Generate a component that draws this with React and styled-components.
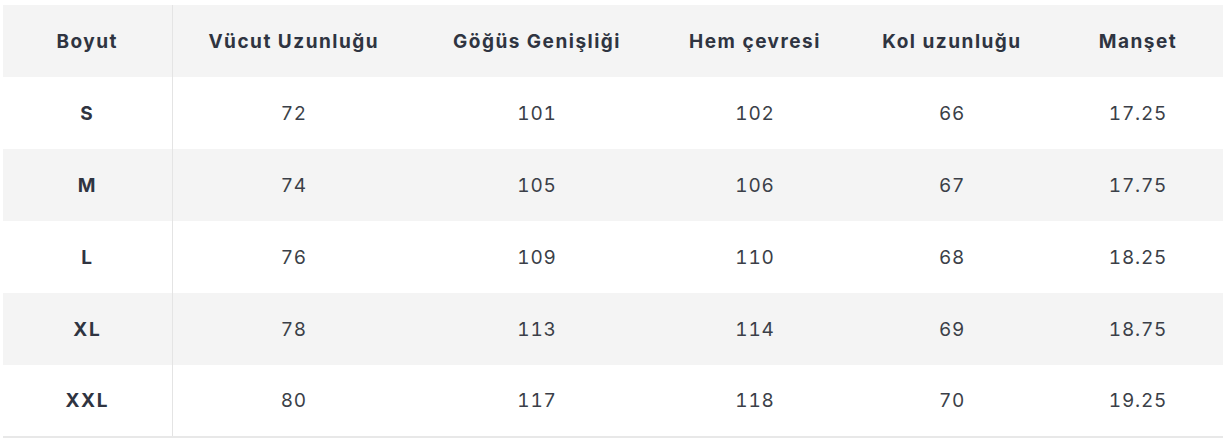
import React from 'react'
import styled, { createGlobalStyle } from 'styled-components'

const columns = ['Boyut', 'Vücut Uzunluğu', 'Göğüs Genişliği', 'Hem çevresi', 'Kol uzunluğu', 'Manşet']
const widths = [169, 243, 244, 192, 202, 170]

const rows = [
  ['S', '72', '101', '102', '66', '17.25'],
  ['M', '74', '105', '106', '67', '17.75'],
  ['L', '76', '109', '110', '68', '18.25'],
  ['XL', '78', '113', '114', '69', '18.75'],
  ['XXL', '80', '117', '118', '70', '19.25'],
]

function App() {
  return (
    <Page>
      <GlobalStyle />
      <Table>
        <colgroup>
          {widths.map((w, i) => <col key={i} style={{ width: w }} />)}
        </colgroup>
        <thead>
          <Row shaded>
            {columns.map((c, i) => <HeadCell key={c} first={i === 0}>{c}</HeadCell>)}
          </Row>
        </thead>
        <tbody>
          {rows.map((r, ri) => (
            <Row key={r[0]} shaded={ri % 2 === 1}>
              {r.map((v, i) => (
                <Cell key={i} first={i === 0}>{v}</Cell>
              ))}
            </Row>
          ))}
        </tbody>
      </Table>
    </Page>
  )
}

export default App

const GlobalStyle = createGlobalStyle`
  body {
    margin: 0;
    background: #fff;
    font-family: Inter, "Noto Sans", sans-serif;
  }
`
const Page = styled.div`
  padding: 5px 5px 0 3px;
`
const Table = styled.table`
  width: 1220px;
  border-collapse: collapse;
  table-layout: fixed;
  border-bottom: 2px solid #e8e8e8;
`
const Row = styled.tr`
  height: 72px;
  background: ${props => props.shaded ? '#f4f4f4' : '#fff'};
`
const HeadCell = styled.th`
  padding: 0;
  text-align: center;
  font-size: 19px;
  font-weight: 700;
  letter-spacing: 1.5px;
  color: #2f3441;
  border-right: ${props => props.first ? '1px solid #e4e4e4' : 'none'};
`
const Cell = styled.td`
  padding: 0;
  text-align: center;
  font-size: 19px;
  font-weight: ${props => props.first ? 700 : 400};
  font-variant-numeric: tabular-nums;
  color: ${props => props.first ? '#2f3441' : '#3b3f48'};
  letter-spacing: ${props => props.first ? '1.5px' : '0.8px'};
  border-right: ${props => props.first ? '1px solid #e4e4e4' : 'none'};
`
